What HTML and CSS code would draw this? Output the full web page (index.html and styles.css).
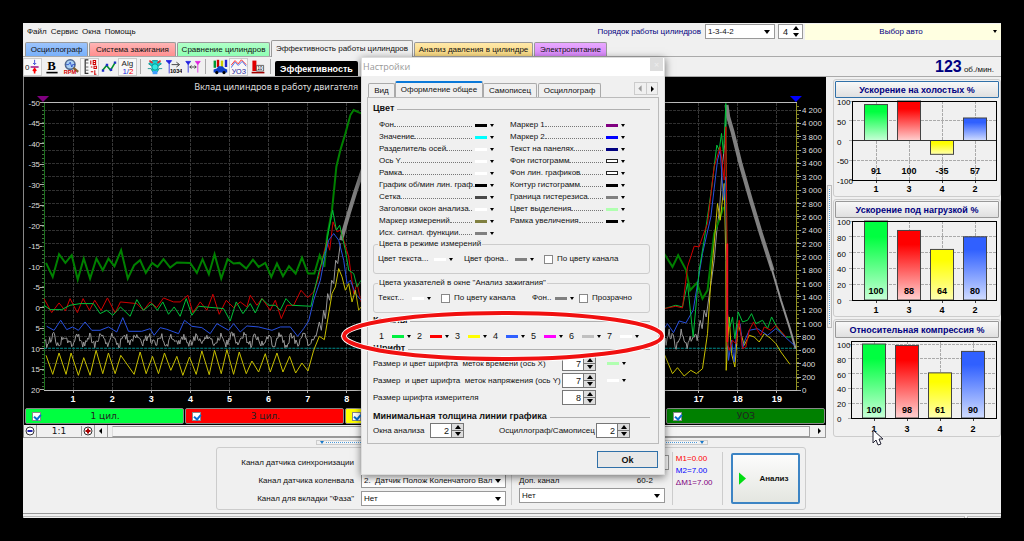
FILE: index.html
```html
<!DOCTYPE html>
<html lang="ru">
<head>
<meta charset="utf-8">
<title>Эффективность работы цилиндров</title>
<link rel="stylesheet" href="styles.css">
</head>
<body>
<div class="app">
  <header class="menubar">
    <nav class="menu"><a href="#">Файл</a><a href="#">Сервис</a><a href="#">Окна</a><a href="#">Помощь</a></nav>
    <label class="order-label" for="order">Порядок работы цилиндров</label>
    <span class="select order"><select id="order"><option>1-3-4-2</option></select></span>
    <span class="spin count"><input type="text" value="4" aria-label="Число цилиндров"><span class="arrows"><button aria-label="Больше"></button><button aria-label="Меньше"></button></span></span>
    <button class="auto"><span>Выбор авто</span><i class="caret"></i></button>
  </header>
  <nav class="tabs">
    <button class="tab blue">Осциллограф</button><button class="tab pink">Система зажигания</button><button class="tab mint">Сравнение цилиндров</button><button class="tab current">Эффективность работы цилиндров</button><button class="tab sand">Анализ давления в цилиндре</button><button class="tab violet">Электропитание</button>
  </nav>
  <div class="toolbar">
    <button class="tool on" aria-label="Смещение"><svg viewBox="0 0 20 20"><text x="0" y="14" font-size="10" fill="#222">0</text><path d="M7 10h10" stroke="#a0208a" stroke-width="2"/><path d="M12 1v6M10 5l2 2 2-2" stroke="#2030d0" fill="none"/><path d="M12 18v-6M10 15l2-3 2 3" stroke="red" fill="none" stroke-width="2"/></svg></button>
    <button class="tool" aria-label="Жирный"><svg viewBox="0 0 20 20"><text class="serif" x="4" y="14" font-size="16" font-weight="bold">B</text><path d="M3 17h14" stroke="#000" stroke-width="2"/></svg></button>
    <button class="tool" aria-label="Поиск оборотов"><svg viewBox="0 0 20 20"><circle cx="9" cy="7" r="6" fill="#a8d0f4" stroke="#506890" stroke-width="2"/><path d="M4 7h3l2-3 2 6 1-3h3" stroke="#2040c0" fill="none"/><path d="M13 11l6 5" stroke="#806030" stroke-width="3"/><text x="1" y="19" font-size="7" font-weight="bold" fill="#d00000">RPM</text></svg></button>
    <button class="tool on" aria-label="Шкала"><svg viewBox="0 0 20 20"><path d="M8 1H4v17h4" stroke="#333" fill="none" stroke-width="1.5"/><path d="M5 5h3M5 10h3M5 14h3" stroke="#444"/><path d="M11 2v5M14 2h3v5h-3zM14 4.500h3M11 10h2M15 9h3v3h-3zM11 16h3M16 14v5M15 19h3" stroke="#d00000" fill="none" stroke-width="1.300"/></svg></button>
    <button class="tool" aria-label="Линия"><svg viewBox="0 0 20 20"><path d="M2 14l5-6 5 6 6-10" stroke="#009028" fill="none" stroke-width="2"/><path d="M1 13h3v3H1zM6 6h3v3H6zM11 12h3v3h-3zM16 3h3v3h-3z" fill="#2030c8"/></svg></button>
    <button class="tool on" aria-label="Алгоритм"><svg viewBox="0 0 20 20"><text x="2" y="9" font-size="10" fill="#222">Alg</text><text x="3" y="19" font-size="10" fill="#2030e0">1/<tspan fill="red">2</tspan></text></svg></button>
    <span class="sep"></span>
    <button class="tool" aria-label="Двигатель"><svg viewBox="0 0 20 20"><path d="M2 6l5-4h6l5 4-4 3H6zM1 12h4l2 4h6l2-4h4" fill="#19d0d0" stroke="#088"/><circle cx="10" cy="10" r="4" fill="#30e8e0" stroke="#088"/><path d="M3 2l4 3M17 2l-4 3" stroke="#e03030" stroke-width="2"/><path d="M7 15h6v4H7z" fill="#40a0ff"/></svg></button>
    <button class="tool" aria-label="Метка 1034"><svg viewBox="0 0 20 20"><path d="M0 2h7l-3 4zM4 5v13" fill="#2020e0" stroke="#2020e0"/><path d="M7 7h9M13 4l4 3-4 3" stroke="#222" fill="none"/><text x="5" y="18" font-size="7" font-weight="bold">1034</text></svg></button>
    <button class="tool" aria-label="Между метками"><svg viewBox="0 0 20 20"><path d="M1 3h6L4 7zM4 6v11" fill="#2020e0" stroke="#2020e0"/><path d="M13 3h6l-3 4zM16 6v11" fill="#e020e0" stroke="#e020e0"/><path d="M6 10h8M8 8l-2 2 2 2M12 8l2 2-2 2" stroke="#222" fill="none"/></svg></button>
    <span class="sep"></span>
    <button class="tool" aria-label="Автомобиль"><svg viewBox="0 0 20 20"><path d="M2 2h3v9H2z" fill="#093"/><path d="M6 1h3v9H6z" fill="#c00"/><path d="M11 2h3v8h-3z" fill="#cc0"/><path d="M16 1h3v9h-3z" fill="#22c"/><path d="M2 13l4-1 2-3h5l3 3 3 1v4H2z" fill="#1040c8"/><circle cx="6" cy="17" r="2"/><circle cx="15" cy="17" r="2"/></svg></button>
    <button class="tool on" aria-label="УОЗ"><svg viewBox="0 0 20 20"><path d="M0 8l5-6 4 4 4-5 6 6" stroke="red" fill="none"/><path d="M0 11l5-7 4 4 5-5 5 6" stroke="#2050e0" fill="none"/><text x="1" y="19" font-size="9" fill="#2020a0">УОЗ</text></svg></button>
    <button class="tool" aria-label="Гистограмма"><svg viewBox="0 0 20 20"><path d="M3 2h5v13H3z" fill="#e00000"/><path d="M8 8h9v7H8z" fill="#fff" stroke="#444"/><text x="9" y="14" font-size="6">10</text><path d="M2 17h16" stroke="#a00000" stroke-width="2"/></svg></button>
    <span class="sep"></span>
    <button class="subtab">Эффективность</button>
    <output class="rpm"><b>123</b> об./мин.</output>
  </div>

  <div class="main">
    <section class="scope">
      <svg class="plot" viewBox="24 77 801 331" id="plot">
        <text class="plot-title" x="194" y="90">Вклад цилиндров в работу двигателя</text>
        <g id="grid"></g>
        <path d="M37 96h12l-6 6z" fill="#800080"/><path d="M789 96h12l-6 6z" fill="#00f"/>
        <path d="M44 348H796" stroke="#008c8c" stroke-dasharray="3 1"/>
        <g class="trace" transform="translate(20 250) scale(.3333)">
          <path id="noiseL" stroke="#989898"/>
          <path class="heavy" stroke="#808080" d="M962-30L985-110 1005-175 1030-250"/>
          <polyline class="mid" stroke="#008000" points="78,38 98,80 117,12 136,38 155,15 173,88 191,25 210,85 229,25 248,60 265,25 283,48 303,0 323,85 342,45 360,30 377,68 396,38 412,50 430,27 450,52 470,37 510,38 530,68 547,27 566,72 583,12 603,85 622,27 640,40 658,38 678,55 698,28 715,50 735,38 753,80 770,40 788,78 806,48 826,70 845,22 863,70 882,70 898,15 912,50 920,-40 935,-120 942,-190 948,-250 960,-300 975,-350 990,-405 1000,-420 1022,-410"/>
          <polyline stroke="#d00000" points="72,145 95,187 117,158 136,182 150,145 172,187 189,145 208,180 224,150 243,180 262,143 285,188 301,155 350,160 370,180 390,155 410,172 430,143 460,155 480,155 503,135 518,187 540,155 560,180 578,132 597,192 618,150 640,172 660,155 680,170 690,135 710,165 725,145 750,180 765,150 783,205 800,165 820,165 842,120 862,142 880,125 895,80 910,10 920,-30 928,0 938,-85 950,-55 960,-60 970,-30 985,20 1000,130 1010,100 1022,155"/>
          <polyline stroke="#00c038" points="72,165 90,178 125,178 150,165 180,160 220,160 240,190 260,180 278,195 301,170 330,198 350,148 370,180 395,160 412,180 428,155 445,192 462,170 480,198 498,145 515,195 535,168 610,175 630,212 648,155 668,190 690,160 705,188 725,145 745,165 765,165 780,180 797,145 815,165 872,168 880,130 897,60 915,0 925,-60 937,-120 948,-60 958,-75 975,0 985,60 1000,70 1010,110 1022,90"/>
          <polyline stroke="#2850e0" points="80,228 102,240 122,210 140,238 158,230 175,240 195,215 215,240 240,240 265,230 290,245 308,202 325,243 365,243 390,235 402,255 420,232 440,237 475,250 493,210 515,228 545,232 570,250 590,220 625,240 640,220 660,245 680,227 715,230 755,240 780,230 810,230 832,258 850,235 865,212 880,150 900,90 915,10 925,-30 940,-50 955,-30 970,30 980,100 990,90 1005,130 1022,150"/>
          <polyline stroke="#c8c000" points="78,315 98,372 117,308 138,372 153,308 175,375 191,322 210,375 228,300 248,370 265,308 285,370 302,315 342,372 360,305 378,370 397,318 415,370 433,308 452,360 470,318 488,375 508,320 528,372 545,302 567,373 583,300 603,370 620,298 640,372 657,305 678,370 695,332 715,365 735,310 750,365 770,308 788,365 808,318 826,368 845,338 863,362 880,300 897,258 912,268 935,130 945,110 955,55 965,80 975,120 985,100 995,155 1005,120 1015,180 1022,170"/>
        </g>
        <g class="trace" transform="translate(660 260) scale(.3333)">
          <path id="noiseR" stroke="#989898"/>
          <path class="heavy" stroke="#808080" d="M197-465L202-430 215-385 240-285 270-180 300-80 335 30"/>
          <path class="mid" stroke="#909090" d="M325 0L360 120 387 205 404 265"/>
          <polyline class="mid" stroke="#008000" points="10,-20 35,20 52,-15 75,28 88,90 108,68 125,115 140,90 150,5 160,-80 175,-120 188,-160"/>
          <polyline stroke="#c8c000" points="10,280 35,340 50,322 70,347 90,330 107,340 125,325 140,220 150,60 160,-50 170,-170 178,-120 190,-230 195,0 196,330 205,170 212,280 222,320 232,190 250,255 265,225 280,230 295,245 310,220 330,235 345,250 360,275 387,312"/>
          <polyline stroke="#2850e0" points="10,205 20,190 38,217 55,182 75,188 97,150 112,60 125,-20 150,-130 170,-300 178,-330 188,-180 195,-250 198,200 203,300 212,240 220,305 228,200 238,190 245,265 252,240 265,210 290,205 320,225 345,205 400,255"/>
          <polyline stroke="#00c038" points="10,145 45,135 65,140 80,70 97,230 115,30 130,-60 150,-200 168,-345 175,-330 182,-380 188,-320 195,-470 198,150 207,200 215,170 222,235 232,155 245,185 260,180 272,160 285,190 305,180 320,205 332,170 350,205 375,230 390,230"/>
          <polyline stroke="#d00000" points="10,145 45,138 65,143 80,20 100,-42 115,-40 125,-70 140,-110 160,-280 178,-340 190,-240 195,-400 199,0 200,250 205,270 215,240 225,250 235,180 245,265 255,260 265,210 278,185 290,210 300,225 310,200 330,210 345,195 375,230"/>
          <path class="mid" d="M199-50V245" stroke="#f01020"/>
        </g>
      </svg>
      <div class="channels">
        <label class="ch g"><input type="checkbox" checked><span>1 цил.</span></label>
        <label class="ch r"><input type="checkbox" checked><span>3 цил.</span></label>
        <label class="ch y"><input type="checkbox" checked><span>4 цил.</span></label>
        <label class="ch b"><input type="checkbox" checked><span>2 цил.</span></label>
        <label class="ch dg"><input type="checkbox" checked><span>УОЗ</span></label>
      </div>
      <div class="scroll">
        <button aria-label="Уменьшить"><svg viewBox="0 0 12 12"><circle cx="6" cy="6" r="4" fill="#fff" stroke="#333"/><path d="M3.500 6h5" stroke="#22a" stroke-width="2"/></svg></button>
        <span class="ratio">1:1</span>
        <button aria-label="Увеличить"><svg viewBox="0 0 12 12"><circle cx="6" cy="6" r="4" fill="#fff" stroke="#333"/><path d="M3.500 6h5M6 3.500v5" stroke="#a00" stroke-width="2"/></svg></button>
        <button aria-label="Влево"><svg viewBox="0 0 12 12"><path d="M7 3v6L4 6z"/></svg></button>
        <span class="track"></span>
        <button aria-label="Вправо"><svg viewBox="0 0 12 12"><path d="M5 3v6l3-3z"/></svg></button>
      </div>
    </section>
    <div class="vsplit"><span></span></div>
    <aside class="side">
      <section class="card"><button class="hot">Ускорение на холостых %</button><svg class="bars" viewBox="834 97 164 97" id="b1"></svg></section>
      <section class="card"><button>Ускорение под нагрузкой %</button><svg class="bars" viewBox="834 217 164 97" id="b2"></svg></section>
      <section class="card"><button>Относительная компрессия %</button><svg class="bars" viewBox="834 338 164 97" id="b3"></svg></section>
    </aside>
  </div>

  <footer class="bottom">
    <div class="hsplit"><i></i><span></span><i></i></div>
    <div class="panel">
      <div class="sources">
        <label for="sync">Канал датчика синхронизации</label><span class="select wide"><select id="sync"><option></option></select></span>
        <label for="crank">Канал датчика коленвала</label><span class="select"><select id="crank"><option>2.&nbsp; Датчик Полож Коленчатого Вал</option></select></span>
        <label for="phase">Канал для вкладки "Фаза"</label><span class="select"><select id="phase"><option>Нет</option></select></span>
      </div>
      <div class="extra">
        <div class="pair"><label for="extra">Доп. канал</label><span>60-2</span></div>
        <span class="select"><select id="extra"><option>Нет</option></select></span>
      </div>
      <div class="markers"><span class="m1">M1=0.00</span><span class="m2">M2=7.00</span><span class="dm">ΔM1=7.00</span></div>
      <button class="analyse"><svg viewBox="0 0 8 14"><path d="M0 0v14l8-7z" fill="#0d1" /></svg><span>Анализ</span></button>
    </div>
    <div class="status"><span></span><span></span></div>
  </footer>

  <div class="dialog" role="dialog" aria-label="Настройки">
    <div class="dlg-title"><span>Настройки</span><button aria-label="Закрыть">×</button></div>
    <div class="dlg-tabs"><button>Вид</button><button class="sel">Оформление общее</button><button>Самописец</button><button>Осциллограф</button><span class="pager"><button aria-label="Назад" disabled><svg viewBox="0 0 10 10"><path d="M6 2v6L3 5z" fill="#999"/></svg></button><button aria-label="Вперёд"><svg viewBox="0 0 10 10"><path d="M4 2v6l3-3z"/></svg></button></span></div>
    <div class="sheet">
      <h2>Цвет</h2>
      <div class="colors">
        <div class="collist">
          <div><span class="dots">Фон</span><button class="sw black" aria-label="Фон"></button></div>
          <div><span class="dots">Значение</span><button class="sw cyan" aria-label="Значение"></button></div>
          <div><span class="dots">Разделитель осей</span><button class="sw white" aria-label="Разделитель осей"></button></div>
          <div><span class="dots">Ось Y</span><button class="sw white" aria-label="Ось Y"></button></div>
          <div><span class="dots">Рамка</span><button class="sw white" aria-label="Рамка"></button></div>
          <div><span class="dots">График об/мин лин. граф.</span><button class="sw black" aria-label="График"></button></div>
          <div><span class="dots">Сетка</span><button class="sw dgray" aria-label="Сетка"></button></div>
          <div><span class="dots">Заголовки окон анализа</span><button class="sw white" aria-label="Заголовки"></button></div>
          <div><span class="dots">Маркер измерений</span><button class="sw olive" aria-label="Маркер измерений"></button></div>
          <div><span class="dots">Исх. сигнал. функции</span><button class="sw gray" aria-label="Сигнал"></button></div>
        </div>
        <div class="collist">
          <div><span class="dots">Маркер 1</span><button class="sw purple" aria-label="Маркер 1"></button></div>
          <div><span class="dots">Маркер 2</span><button class="sw bluec" aria-label="Маркер 2"></button></div>
          <div><span class="dots">Текст на панелях</span><button class="sw navy" aria-label="Текст"></button></div>
          <div><span class="dots">Фон гистограмм</span><button class="sw hollow" aria-label="Фон гистограмм"></button></div>
          <div><span class="dots">Фон лин. графиков</span><button class="sw hollow" aria-label="Фон графиков"></button></div>
          <div><span class="dots">Контур гистограмм</span><button class="sw black" aria-label="Контур"></button></div>
          <div><span class="dots">Граница гистерезиса</span><button class="sw gray" aria-label="Граница"></button></div>
          <div><span class="dots">Цвет выделения</span><button class="sw palegreen" aria-label="Выделение"></button></div>
          <div><span class="dots">Рамка увеличения</span><button class="sw black" aria-label="Рамка увеличения"></button></div>
        </div>
      </div>
      <fieldset class="measure"><legend>Цвета в режиме измерений</legend>
        <div class="row"><span>Цвет текста...</span><button class="sw white" aria-label="Цвет текста"></button><span>Цвет фона..</span><button class="sw gray" aria-label="Цвет фона"></button><label><input type="checkbox">По цвету канала</label></div>
      </fieldset>
      <fieldset class="pointers"><legend>Цвета указателей в окне "Анализ зажигания"</legend>
        <div class="row"><span>Текст...</span><button class="sw white" aria-label="Текст"></button><label><input type="checkbox">По цвету канала</label><span>Фон..</span><button class="sw gray" aria-label="Фон"></button><label><input type="checkbox">Прозрачно</label></div>
      </fieldset>
      <h2>Каналы</h2>
      <div class="chans">
        <div>1<button class="sw green" aria-label="Канал 1"></button></div><div>2<button class="sw red" aria-label="Канал 2"></button></div><div>3<button class="sw yellow" aria-label="Канал 3"></button></div><div>4<button class="sw azure" aria-label="Канал 4"></button></div><div>5<button class="sw magenta" aria-label="Канал 5"></button></div><div>6<button class="sw silver" aria-label="Канал 6"></button></div><div>7<button class="sw white" aria-label="Канал 7"></button></div>
      </div>
      <h2>Шрифт</h2>
      <div class="fonts">
        <label for="fx">Размер и цвет шрифта&nbsp; меток времени (ось X)</label><span class="spin"><input id="fx" type="text" value="7"><span class="arrows"><button aria-label="Больше"></button><button aria-label="Меньше"></button></span></span><button class="sw palegreen" aria-label="Цвет X"></button>
        <label for="fy">Размер&nbsp; и цвет шрифта&nbsp; меток напряжения (ось Y)</label><span class="spin"><input id="fy" type="text" value="7"><span class="arrows"><button aria-label="Больше"></button><button aria-label="Меньше"></button></span></span><button class="sw white" aria-label="Цвет Y"></button>
        <label for="fm">Размер шрифта измерителя</label><span class="spin"><input id="fm" type="text" value="8"><span class="arrows"><button aria-label="Больше"></button><button aria-label="Меньше"></button></span></span>
      </div>
      <h2>Минимальная толщина линии графика</h2>
      <div class="widths">
        <label for="wa">Окна анализа</label><span class="spin"><input id="wa" type="text" value="2"><span class="arrows"><button aria-label="Больше"></button><button aria-label="Меньше"></button></span></span>
        <label for="wo">Осциллограф/Самописец</label><span class="spin"><input id="wo" type="text" value="2"><span class="arrows"><button aria-label="Больше"></button><button aria-label="Меньше"></button></span></span>
      </div>
    </div>
    <div class="dlg-foot"><button class="ok">Ok</button></div>
    <svg class="ring" viewBox="0 0 326 54"><ellipse cx="163" cy="27" rx="159" ry="23" fill="none" stroke="#fff" stroke-width="6"/><ellipse cx="163" cy="27" rx="159" ry="23" fill="none" stroke="#f01010" stroke-width="4"/></svg>
  </div>
  <svg class="pointer" viewBox="0 0 12 18"><path d="M1 1v13l3-3 2 5 3-1-2-5h4z" fill="#fff" stroke="#223"/></svg>
</div>
<script src="script.js"></script>
</body>
</html>
```
FILE: styles.css
```css
* { box-sizing: border-box; }
body { margin: 0; padding: 23px; background: #000; min-height: 100vh; font: 8px/12px "Liberation Sans", Arial, sans-serif; color: #111; }
button, input, select { font: inherit; color: inherit; margin: 0; padding: 0; border: 0; background: none; border-radius: 0; }
a { color: inherit; text-decoration: none; }
svg { display: block; }
svg text { font-family: "Liberation Sans", Arial, sans-serif; }
svg .serif { font-family: "Liberation Serif", serif; }
.app { position: relative; background: #f0f0f0; display: flex; flex-direction: column; min-height: 495px; }

.menubar { display: flex; align-items: center; height: 17px; padding-left: 4px; }
.menu { display: flex; gap: 4px; flex: 1; }
.order-label { color: #000080; margin-right: 4px; }
.select { position: relative; display: block; height: 15px; background: #fff; border: 1px solid #999; }
.select::after { content: ""; position: absolute; right: 4px; top: 5px; border: 3px solid transparent; border-top: 4px solid #000; border-bottom: 0; }
.select select { appearance: none; width: 100%; height: 100%; padding: 0 12px 0 2px; line-height: 12px; display: block; text-overflow: clip; }
.select.order { width: 70px; margin-right: 3px; }
.spin { display: flex; width: 34px; height: 15px; background: #fff; border: 1px solid #777; }
.spin input { flex: 1; min-width: 0; text-align: right; padding-right: 2px; font-size: 9px; }
.arrows { display: flex; flex-direction: column; width: 12px; background: #ddd; border-left: 1px solid #777; }
.arrows button { flex: 1; position: relative; }
.arrows button + button { border-top: 1px solid #777; }
.arrows button::after { content: ""; display: block; width: 0; margin: auto; border: 3px solid transparent; border-bottom: 4px solid #000; border-top: 0; }
.arrows button + button::after { border-top: 4px solid #000; border-bottom: 0; }
.count { width: 25px; margin-right: 2px; border-color: #999; }
.count .arrows { background: #fff; border: 0; }
.count .arrows button + button { border: 0; }
.auto { width: 196px; height: 16px; background: #ffffe1; color: #000080; display: flex; align-items: center; padding: 0 4px; }
.auto span { flex: 1; }
.caret, .sw::after { display: block; width: 0; border: 2px solid transparent; border-top: 3px solid #000; border-bottom: 0; content: ""; }

.tabs { display: flex; align-items: flex-end; height: 17px; padding-left: 2px; gap: 1px; border-bottom: 1px solid #aaa; }
.tab { height: 14px; border: 1px solid #999; border-bottom: 0; border-radius: 2px 2px 0 0; }
.blue { width: 63px; background: linear-gradient(#9cc4fc, #78b0fa); }
.pink { width: 87px; background: linear-gradient(#ffb4b4, #ff9090); }
.mint { width: 93px; background: linear-gradient(#b0ffc8, #90ffb4); }
.current { width: 142px; height: 17px; background: #f0f0f0; margin-bottom: -1px; }
.sand { width: 119px; background: linear-gradient(#ffe8a8, #f8d880); }
.violet { width: 73px; background: linear-gradient(#e8a8ff, #d888fa); }

.toolbar { display: flex; align-items: center; height: 20px; border-bottom: 1px solid #aaa; }
.tool { width: 19px; height: 18px; display: grid; place-items: center; border: 1px solid transparent; }
.tool svg { width: 16px; height: 16px; }
.tool.on { background: #f8f8f8; border-color: #ccc; }
.sep { width: 1px; height: 15px; background: #aaa; margin: 0 4px 0 3px; }
.subtab { align-self: flex-end; width: 83px; height: 15px; background: #000; color: #fff; font-weight: bold; font-size: 9px; border-radius: 2px 2px 0 0; }
.rpm { margin-left: auto; margin-right: 7px; }
.rpm b { font-size: 16px; line-height: 18px; color: #000080; }

.main { display: flex; align-items: flex-start; }
.scope { flex: 1; min-width: 0; background: #000; border-left: 1px solid #888; }
.plot { width: 100%; background: #000; }
.plot text { fill: #ddd; font-size: 8px; }
.plot .plot-title { font: 9px "Noto Sans", sans-serif; }
.plot .xl { font-weight: bold; text-anchor: middle; fill: #fff; font-size: 9px; }
.plot .yl { text-anchor: end; }
.trace > * { fill: none; stroke-width: 1px; vector-effect: non-scaling-stroke; }
.trace > .mid { stroke-width: 2px; }
.trace > .heavy { stroke-width: 4px; }
.channels { display: grid; grid-template-columns: repeat(5, 1fr); gap: 1px; padding: 0 1px; }
.ch { display: flex; align-items: center; height: 16px; border: 1px solid #888; border-radius: 2px; padding: 0 6px; color: #222; }
.ch span { flex: 1; text-align: center; font: 9px "DejaVu Sans", sans-serif; padding-right: 8px; }
.ch input, .dialog input[type=checkbox] { appearance: none; width: 9px; height: 9px; background: #fff; border: 1px solid #888; flex: none; }
.ch input { position: relative; }
.ch input:checked::after { content: ""; position: absolute; left: 2px; top: 0; width: 3px; height: 5px; border: solid #0a6fd0; border-width: 0 2px 2px 0; rotate: 40deg; }
.g { background: #00ff40; }
.r { background: #f00; }
.y { background: #ff0; }
.b { background: #3060ff; }
.dg { background: #008000; }
.scroll { display: flex; height: 14px; background: #f0f0f0; border-top: 1px solid #000; border-bottom: 1px solid #999; align-items: center; }
.scroll button { width: 13px; height: 12px; border-right: 1px solid #999; }
.scroll svg { width: 12px; height: 12px; }
.ratio { width: 45px; text-align: center; font: 9px "DejaVu Sans", sans-serif; border-right: 1px solid #999; }
.track { flex: 1; height: 11px; margin: 0 3px 0 4px; border: 1px solid #999; border-left-color: #ddd; background: #f4f4f4; }
.vsplit { width: 7px; display: flex; padding: 108px 1px 0; }
.vsplit span { width: 5px; height: 143px; border: 1px solid #bbb; background: repeating-linear-gradient(#60a8e0 0 1px, #fff 1px 2px) content-box; padding: 3px 1px; }

.side { width: 168px; display: flex; flex-direction: column; gap: 2px; padding-top: 2px; }
.card { border: 1px solid #ccc; border-radius: 3px; padding: 1px; }
.card button { display: block; width: 100%; height: 17px; border: 1px solid #999; border-radius: 1px; background: linear-gradient(#f8f8f8, #e0e0e0); color: #000080; font-weight: bold; font-size: 9px; }
.card .hot { border-color: #3070a8; }
.bars { width: 100%; }
.bars .v { font: bold 9px "Liberation Sans", sans-serif; text-anchor: middle; }
.bars .a { font-size: 8px; }

.bottom { flex: 1; display: flex; flex-direction: column; padding-top: 2px; }
.hsplit { display: flex; align-items: center; width: 392px; height: 5px; margin: 0 0 2px 293px; border: 1px solid #ccc; padding: 0 3px; gap: 2px; }
.hsplit span { flex: 1; height: 1px; background: repeating-linear-gradient(90deg, #4a98d8 0 1px, #fff 1px 2px); }
.hsplit i { border: 2px solid transparent; border-top: 3px solid #1878c8; border-bottom: 0; }
.panel { display: flex; width: 590px; margin-left: 193px; border: 1px solid #ccc; border-radius: 3px; padding: 4px 5px; height: 63px; }
.sources { display: grid; grid-template-columns: 132px 145px; grid-auto-rows: 15px; align-content: start; row-gap: 3px; column-gap: 7px; align-items: center; padding: 3px 5px 0 0; border-right: 1px solid #ccc; }
.sources label { text-align: right; }
.select.wide { width: 308px; }
.extra { width: 162px; padding: 23px 7px 0; border-right: 1px solid #ccc; }
.pair { display: flex; justify-content: space-between; padding-right: 12px; margin-bottom: 1px; }
.markers { width: 51px; display: flex; flex-direction: column; padding: 1px 0 0 3px; border-right: 1px solid #ccc; }
.m1 { color: #f00; }
.m2 { color: #00f; }
.dm { color: #800080; }
.analyse { width: 69px; height: 51px; margin: 1px 0 0 8px; border: 2px solid #3c84c4; border-radius: 2px; background: linear-gradient(#fcfcfc, #e4e6e0); display: flex; align-items: center; padding-left: 6px; gap: 13px; font-weight: bold; }
.analyse svg { width: 7px; height: 13px; }
.status { display: flex; gap: 2px; margin-top: auto; border-top: 1px solid #999; height: 5px; padding-top: 2px; }
.status span { height: 2px; border: 1px solid #bbb; border-bottom: 0; width: 34px; }
.status span:first-child { flex: 1; }

.dialog { position: absolute; left: 338px; top: 34px; width: 304px; background: #f0f0f0; border: 1px solid #ddd; box-shadow: 0 2px 8px #0008; display: flex; flex-direction: column; }
.dlg-title { display: flex; justify-content: space-between; background: #fff; height: 18px; padding: 0 1px; color: #999; font: 9px/17px "Open Sans", sans-serif; }
.dlg-title button { width: 13px; height: 13px; background: #ddd; color: #eee; line-height: 12px; }
.dlg-tabs { display: flex; align-items: flex-end; height: 21px; padding: 0 6px; }
.dlg-tabs > button { height: 14px; border: 1px solid #aaa; border-bottom: 0; border-radius: 2px 2px 0 0; width: 27px; }
.dlg-tabs > .sel { width: 88px; height: 16px; border-top: 2px solid #0a78d8; background: #f0f0f0; }
.dlg-tabs > button:nth-child(3) { width: 54px; margin-right: 1px; }
.dlg-tabs > button:nth-child(4) { width: 63px; }
.pager { display: flex; margin-left: auto; margin-bottom: 2px; border: 1px solid #ccc; }
.pager button { width: 11px; height: 11px; }
.pager button + button { border-left: 1px solid #ccc; }
.sheet { margin: 0 5px; border: 1px solid #bbb; padding: 4px 8px 5px 5px; }
h2 { font-size: 9px; line-height: 12px; margin: 0; display: flex; align-items: center; gap: 3px; }
h2::after { content: ""; flex: 1; height: 1px; background: #b0b0b0; margin-top: 2px; }
.colors { display: grid; grid-template-columns: 131px 131px; padding: 5px 0 0 6px; height: 124px; }
.collist > div { display: flex; height: 12px; line-height: 12px; width: 116px; align-items: center; }
.dots { width: 96px; white-space: nowrap; display: flex; align-items: baseline; flex: none; }
.dots::after { content: ""; flex: 1; border-bottom: 1px dotted #777; margin-right: 3px; }
.sw { display: flex; align-items: center; gap: 3px; flex: none; height: 10px; }
.sw::before { content: ""; width: 12px; height: 3px; background: var(--c); }
.black { --c: #000; }
.cyan { --c: #0ff; }
.white { --c: #fff; }
.dgray { --c: #484848; }
.olive { --c: #808040; }
.gray { --c: #808080; }
.purple { --c: #800080; }
.bluec { --c: #00f; }
.navy { --c: #000080; }
.palegreen { --c: #b0ffb0; }
.green { --c: #00f040; }
.red { --c: #f00; }
.yellow { --c: #ff0; }
.azure { --c: #3060ff; }
.magenta { --c: #f0f; }
.silver { --c: #c0c0c0; }
.hollow::before { width: 10px; height: 2px; background: #fff; border: 1px solid #222; box-sizing: content-box; }
fieldset { margin: 0 0 3px; padding: 0 4px; border: 1px solid #ccc; border-radius: 3px; height: 36px; min-width: 0; }
legend { padding: 0 1px; line-height: 12px; }
.row { display: grid; align-items: center; height: 18px; }
.row label { display: flex; align-items: center; gap: 4px; white-space: nowrap; }
.measure .row { grid-template-columns: 56px 30px 51px 29px 1fr; }
.pointers .row { grid-template-columns: 34px 29px 91px 23px 24px 1fr; }
.pointers { margin-bottom: 1px; }
.chans { display: flex; height: 16px; padding: 4px 0 0 6px; }
.chans div { display: flex; width: 38px; align-items: center; gap: 8px; line-height: 12px; font-size: 9px; }
.fonts { display: grid; grid-template-columns: 189px 34px 1fr; grid-auto-rows: 15px; row-gap: 2px; align-items: center; padding: 2px 0 5px; }
.fonts label { white-space: nowrap; }
.fonts .sw { margin-left: 11px; }
.widths { display: grid; grid-template-columns: 57px 69px 97px 34px; align-items: center; padding-top: 1px; }
.dlg-foot { display: flex; justify-content: flex-end; padding: 7px 6px 6px; }
.ok { width: 61px; height: 17px; border: 1px solid #3070a8; background: #e8e8e8; font-weight: bold; font-size: 9px; }
.ring { position: absolute; left: -22px; top: 251px; width: 326px; height: 54px; }
.pointer { position: absolute; left: 849px; top: 406px; width: 12px; height: 18px; }
```
FILE: script.js
```js
const NS = "http://www.w3.org/2000/svg";
function add(parent, tag, attrs, text) {
  const el = document.createElementNS(NS, tag);
  for (const k in attrs) el.setAttribute(k, attrs[k]);
  if (text !== undefined) el.textContent = text;
  parent.appendChild(el);
  return el;
}
const grid = document.getElementById("grid");
const line = (p, d, stroke, dash) => add(p, "path", { d, stroke, fill: "none", "stroke-dasharray": dash || "none", "shape-rendering": "crispEdges" });

for (let i = 0; i <= 21; i++) {
  const y = 390 - i * 13.33;
  if (i) line(grid, `M44 ${y}H796`, "#303030", "3 1");
  line(grid, `M796 ${y}h4`, "#aaa");
  add(grid, "text", { x: 801, y: y + 3 }, String(i * 200).replace(/(\d)(\d{3})$/, "$1 $2"));
}
for (let n = 1; n <= 19; n++) {
  const x = 34 + n * 39.05;
  line(grid, `M${x} 103V390`, "#383838", "3 1");
  line(grid, `M${x} 390v3`, "#aaa");
  // labels 9-16 sit behind the settings dialog
  if (n < 9 || n > 16) add(grid, "text", { x, y: 402, class: "xl" }, n);
}
for (let i = 0; i <= 14; i++) {
  const y = 102.5 + i * 20.5;
  line(grid, `M40 ${y}h4`, "#aaa");
  add(grid, "text", { x: 40, y: y + 3, class: "yl" }, -50 + i * 5);
}
line(grid, "M44 102.5H796", "#bbb");
line(grid, "M44 390.5H796", "#bbb");
line(grid, "M44.500 103V390", "#1c701c");
line(grid, "M796 103V390", "#909020");
for (let y = 106; y < 390; y += 4) {
  line(grid, `M42 ${y}h2`, "#407040");
  line(grid, `M796 ${y}h2`, "#808030");
}

function noise(id, from, to, mid, amp, tail) {
  let d = `M${from} ${mid}`, seed = 7;
  for (let x = from; x < to; x += 3) {
    seed = (seed * 73 + 31) % 101;
    d += `L${x} ${Math.round(mid + Math.sin(x / 5.7) * amp * 0.5 + (seed / 101 - 0.5) * amp)}`;
  }
  document.getElementById(id).setAttribute("d", d + tail);
}
noise("noiseL", 74, 888, 269, 25, "L897 215 903 240 910 180 915 205 922 130 928 150 934 90 940 100 946 30 952 40 960-20");
noise("noiseR", 10, 112, 235, 34, "L118 180 124 205 130 150 136 170 145 105 152 60 160 0 168-90 176-150 184-280 192-350 197-465");

function bars(id, o) {
  const svg = document.getElementById(id);
  const y = v => o.y0 + (o.max - v) * (o.y1 - o.y0) / (o.max - o.min);
  for (const t of o.ticks) {
    line(svg, `M${o.x - 3} ${y(t)}H995`, "#aaa", "3 1");
    add(svg, "text", { x: o.lx, y: y(t) + 4, class: "a" }, t);
  }
  o.vals.forEach((v, i) => {
    const cx = o.c + i * o.step, a = y(Math.max(v, 0)), b = y(Math.min(v, 0));
    line(svg, `M${cx} ${o.top}V${o.y1}`, "#aaa", "3 1");
    line(svg, `M${cx} ${o.y1}v3`, "#444");
    const gid = id + "g" + i, g = add(svg, "linearGradient", { id: gid, x2: 0, y2: 1 });
    const c = ["#00ff40", "#ff0000", "#ffff00", "#3060ff"][i];
    add(g, "stop", { offset: "20%", "stop-color": c });
    add(g, "stop", { offset: "100%", "stop-color": ["#c8ffd8", "#ffd0d0", "#ffffb0", "#d0dcff"][i] });
    add(svg, "rect", { x: cx - 11.5, y: a, width: 23, height: b - a, fill: `url(#${gid})`, stroke: "#444" });
    add(svg, "text", { x: cx, y: o.vy, class: "v" }, v);
    add(svg, "text", { x: cx, y: o.ny, class: "v" }, [1, 3, 4, 2][i]);
  });
  line(svg, `M${o.x} ${y(0)}H995`, "#333");
  line(svg, `M${o.x} ${o.top}H995V${o.y1}H${o.x}z`, "#000");
}
bars("b1", { x: 851, lx: 836, top: 100, y0: 100, y1: 179, max: 100, min: -100, ticks: [100, 50, 0, -50, -100], vals: [91, 100, -35, 57], c: 875, step: 33, vy: 173, ny: 191 });
bars("b2", { x: 851, lx: 836, top: 220, y0: 220, y1: 299, max: 100, min: 0, ticks: [100, 80, 60, 40, 20, 0], vals: [100, 88, 64, 80], c: 875, step: 33, vy: 293, ny: 312 });
bars("b3", { x: 850, lx: 836, top: 341, y0: 344, y1: 418, max: 100, min: 0, ticks: [100, 80, 60, 40, 20, 0], vals: [100, 98, 61, 90], c: 873, step: 33, vy: 413, ny: 432 });
```
